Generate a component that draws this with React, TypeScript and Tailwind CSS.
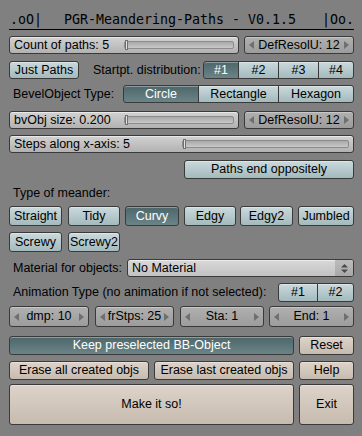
import React from "react";

type Tone = "blue" | "active" | "beige";

const toneCls: Record<Tone, string> = {
  blue: "bg-gradient-to-b from-[#cad9dc] to-[#a4babd] text-black",
  active: "bg-gradient-to-b from-[#4d6669] to-[#6b8487] text-white",
  beige: "bg-gradient-to-b from-[#ddd3c9] to-[#c7bbaf] text-black",
};

function Btn({ label, tone = "blue", w, h, className = "" }: { label: string; tone?: Tone; w: number; h?: number; className?: string }) {
  return (
    <div
      style={{ width: w, height: h }}
      className={`flex items-center justify-center border border-[#3a3a3a] shadow-[inset_0_1px_0_rgba(255,255,255,0.35)] ${toneCls[tone]} ${className}`}
    >
      {label}
    </div>
  );
}

function Group({ items, widths }: { items: { label: string; active?: boolean }[]; widths: number[] }) {
  return (
    <div className="flex h-full">
      {items.map((it, i) => (
        <Btn
          key={it.label}
          label={it.label}
          tone={it.active ? "active" : "blue"}
          w={widths[i]}
          className={`h-full ${i === 0 ? "rounded-l-[3px]" : "-ml-px"} ${i === items.length - 1 ? "rounded-r-[3px]" : ""}`}
        />
      ))}
    </div>
  );
}

function Slider({ label, w, pos = 0 }: { label: string; w: number; pos?: number }) {
  return (
    <div
      style={{ width: w }}
      className="flex h-full rounded-[3px] border border-[#3a3a3a] bg-gradient-to-b from-[#d2d2d2] to-[#b2b2b2] shadow-[inset_0_1px_0_rgba(255,255,255,0.5)]"
    >
      <div className="flex w-1/2 items-center pl-[4px] text-black">{label}</div>
      <div className="flex w-1/2 items-center pr-[4px]">
        <div className="relative h-[8px] flex-1 rounded-[2px] border border-[#8c8c8c] bg-gradient-to-b from-[#a9a9a9] to-[#c9c9c9]">
          <div style={{ left: pos }} className="absolute -top-[2px] h-[10px] w-[3px] border border-[#707070] bg-[#e2e2e2]" />
        </div>
      </div>
    </div>
  );
}

function Arrow({ dir }: { dir: "l" | "r" }) {
  return (
    <svg width="5" height="8" viewBox="0 0 5 8" className="shrink-0">
      {dir === "l" ? <path d="M5 0 L0 4 L5 8 Z" fill="#6f6f6f" /> : <path d="M0 0 L5 4 L0 8 Z" fill="#6f6f6f" />}
    </svg>
  );
}

function NumField({ label, w }: { label: string; w: number }) {
  return (
    <div
      style={{ width: w }}
      className="flex h-full items-center justify-between rounded-[3px] border border-[#3a3a3a] bg-gradient-to-b from-[#b0b0b0] to-[#9c9c9c] px-[4px] text-black shadow-[inset_0_1px_0_rgba(255,255,255,0.3)]"
    >
      <Arrow dir="l" />
      <span>{label}</span>
      <Arrow dir="r" />
    </div>
  );
}

export default function App() {
  return (
    <div className="h-[436px] w-[362px] overflow-hidden bg-[#808080] pl-[9px] pr-[8px] text-[12.5px] leading-none text-black [font-family:'Liberation_Sans',Arial,sans-serif]">
      <div className="flex h-[30px] items-end justify-between border-b border-black pb-[3px] pl-[1px] text-[13.3px] [font-family:'DejaVu_Sans_Mono',monospace]">
        <span>.oO|</span>
        <span className="mr-[4px]">PGR-Meandering-Paths - V0.1.5</span>
        <span>|Oo.</span>
      </div>

      <div className="mt-[6px] flex h-[18px] gap-[5px]">
        <Slider label="Count of paths: 5" w={230} />
        <NumField label="DefResolU: 12" w={110} />
      </div>

      <div className="mt-[7px] flex h-[18px] items-center">
        <Btn label="Just Paths" w={70} className="h-full rounded-[3px]" />
        <span className="ml-[14px] flex-1">Startpt. distribution:</span>
        <Group items={[{ label: "#1", active: true }, { label: "#2" }, { label: "#3" }, { label: "#4" }]} widths={[36, 41, 41, 36]} />
      </div>

      <div className="mt-[6px] flex h-[18px] items-center">
        <span className="ml-[4px] flex-1">BevelObject Type:</span>
        <Group items={[{ label: "Circle", active: true }, { label: "Rectangle" }, { label: "Hexagon" }]} widths={[76, 81, 76]} />
      </div>

      <div className="mt-[8px] flex h-[18px] gap-[5px]">
        <Slider label="bvObj size: 0.200" w={230} />
        <NumField label="DefResolU: 12" w={110} />
      </div>

      <div className="mt-[6px] flex h-[18px]">
        <Slider label="Steps along x-axis: 5" w={345} pos={0} />
      </div>

      <div className="mt-[7px] flex h-[19px] justify-end">
        <Btn label="Paths end oppositely" w={170} className="h-full rounded-[3px]" />
      </div>

      <div className="ml-[4px] mt-[8px] h-[14px]">Type of meander:</div>

      <div className="mt-[5px] flex h-[20px]">
        {[
          { label: "Straight", w: 53, gap: 0 },
          { label: "Tidy", w: 52, gap: 6 },
          { label: "Curvy", w: 54, gap: 5, active: true },
          { label: "Edgy", w: 52, gap: 5 },
          { label: "Edgy2", w: 53, gap: 4 },
          { label: "Jumbled", w: 56, gap: 5 },
        ].map((b) => (
          <div key={b.label} style={{ marginLeft: b.gap }} className="h-full">
            <Btn label={b.label} w={b.w} tone={b.active ? "active" : "blue"} className="h-full rounded-[3px]" />
          </div>
        ))}
      </div>

      <div className="mt-[6px] flex h-[20px] gap-[6px]">
        <Btn label="Screwy" w={53} className="h-full rounded-[3px]" />
        <Btn label="Screwy2" w={52} className="h-full rounded-[3px]" />
      </div>

      <div className="mt-[7px] flex h-[18px] items-center">
        <span className="ml-[4px] flex-1">Material for objects:</span>
        <div className="flex h-full w-[227px] overflow-hidden rounded-[3px] border border-[#3a3a3a] bg-gradient-to-b from-[#d8d8d8] to-[#c2c2c2] shadow-[inset_0_1px_0_rgba(255,255,255,0.5)]">
          <span className="flex flex-1 items-center pl-[4px]">No Material</span>
          <div className="flex w-[18px] items-center justify-center bg-gradient-to-b from-[#bcbcbc] to-[#a8a8a8]">
            <svg width="7" height="9" viewBox="0 0 7 9">
              <path d="M3.5 0 L7 3.5 L0 3.5 Z M3.5 9 L7 5.5 L0 5.5 Z" fill="#4a4a4a" />
            </svg>
          </div>
        </div>
      </div>

      <div className="mt-[6px] flex h-[19px] items-center">
        <span className="ml-[4px] flex-1">Animation Type (no animation if not selected):</span>
        <Group items={[{ label: "#1" }, { label: "#2" }]} widths={[40, 37]} />
      </div>

      <div className="mt-[4px] flex h-[21px]">
        <NumField label="dmp: 10" w={80} />
        <div className="ml-[6px] h-full"><NumField label="frStps: 25" w={79} /></div>
        <div className="ml-[6px] h-full"><NumField label="Sta: 1" w={84} /></div>
        <div className="ml-[5px] h-full"><NumField label="End: 1" w={85} /></div>
      </div>

      <div className="mt-[9px] flex h-[19px] gap-[5px]">
        <Btn label="Keep preselected BB-Object" tone="active" w={285} className="h-full rounded-[3px]" />
        <Btn label="Reset" tone="beige" w={55} className="h-full rounded-[3px]" />
      </div>

      <div className="mt-[6px] flex h-[19px] gap-[5px]">
        <Btn label="Erase all created objs" tone="beige" w={140} className="h-full rounded-[3px]" />
        <Btn label="Erase last created objs" tone="beige" w={140} className="h-full rounded-[3px]" />
        <Btn label="Help" tone="beige" w={55} className="h-full rounded-[3px]" />
      </div>

      <div className="mt-[4px] flex h-[41px] gap-[5px]">
        <Btn label="Make it so!" tone="beige" w={285} className="h-full rounded-[3px]" />
        <Btn label="Exit" tone="beige" w={55} className="h-full rounded-[3px]" />
      </div>
    </div>
  );
}
